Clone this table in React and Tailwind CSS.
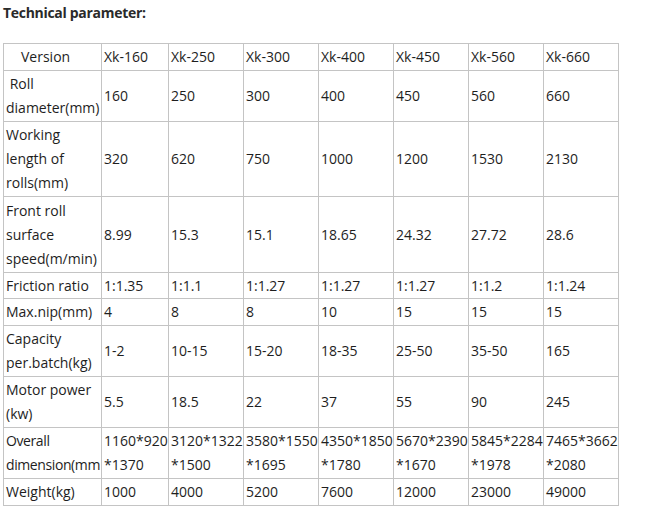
export default function App() {
  const cols = ["Xk-160", "Xk-250", "Xk-300", "Xk-400", "Xk-450", "Xk-560", "Xk-660"];
  const rows = [
    { label: ["\u00a0Roll", "diameter(mm)"], vals: ["160", "250", "300", "400", "450", "560", "660"], h: "h-[51px]" },
    { label: ["Working", "length of", "rolls(mm)"], vals: ["320", "620", "750", "1000", "1200", "1530", "2130"], h: "h-[75px]" },
    { label: ["Front roll", "surface", "speed(m/min)"], vals: ["8.99", "15.3", "15.1", "18.65", "24.32", "27.72", "28.6"], h: "h-[76px]" },
    { label: ["Friction ratio"], vals: ["1:1.35", "1:1.1", "1:1.27", "1:1.27", "1:1.27", "1:1.2", "1:1.24"], h: "h-[26px]" },
    { label: ["Max.nip(mm)"], vals: ["4", "8", "8", "10", "15", "15", "15"], h: "h-[27px]" },
    { label: ["Capacity", "per.batch(kg)"], vals: ["1-2", "10-15", "15-20", "18-35", "25-50", "35-50", "165"], h: "h-[51px]" },
    { label: ["Motor power", "(kw)"], vals: ["5.5", "18.5", "22", "37", "55", "90", "245"], h: "h-[51px]" },
    { label: ["Overall", "dimension(mm"], vals: [["1160*920", "*1370"], ["3120*1322", "*1500"], ["3580*1550", "*1695"], ["4350*1850", "*1780"], ["5670*2390", "*1670"], ["5845*2284", "*1978"], ["7465*3662", "*2080"]], h: "h-[51px]", tight: true },
    { label: ["Weight(kg)"], vals: ["1000", "4000", "5200", "7600", "12000", "23000", "49000"], h: "h-[27px]" },
  ];
  const cell = "border border-[#c4c4c4] align-middle px-[2px] py-0 overflow-hidden whitespace-nowrap";
  return (
    <div className="w-[665px] h-[522px] bg-white text-[#1e1e1e] text-[14px] leading-[24px]" style={{ fontFamily: '"Open Sans", "Noto Sans", sans-serif' }}>
      <div className="pl-[3px] pt-[1px] h-[43px] font-bold text-[14px] tracking-[-0.3px] text-[#2a2a2a]">Technical parameter:</div>
      <table className="table-fixed border-collapse ml-[3px] w-[616px]">
        <colgroup>
          <col className="w-[98px]" />
          <col className="w-[67px]" />
          <col className="w-[75px]" />
          <col className="w-[75px]" />
          <col className="w-[75px]" />
          <col className="w-[75px]" />
          <col className="w-[75px]" />
          <col className="w-[75px]" />
        </colgroup>
        <tbody>
          <tr className="h-[27px]">
            <td className={cell + " pl-[17px]"}>Version</td>
            {cols.map((c) => (
              <td key={c} className={cell}>{c}</td>
            ))}
          </tr>
          {rows.map((r, i) => (
            <tr key={i} className={r.h}>
              <td className={r.tight ? cell + " tracking-[-0.4px]" : cell}>
                {r.label.map((l, j) => (
                  <div key={j}>{l}</div>
                ))}
              </td>
              {r.vals.map((v, j) => (
                <td key={j} className={cell}>
                  {Array.isArray(v) ? v.map((x, k) => <div key={k}>{x}</div>) : v}
                </td>
              ))}
            </tr>
          ))}
        </tbody>
      </table>
    </div>
  );
}
